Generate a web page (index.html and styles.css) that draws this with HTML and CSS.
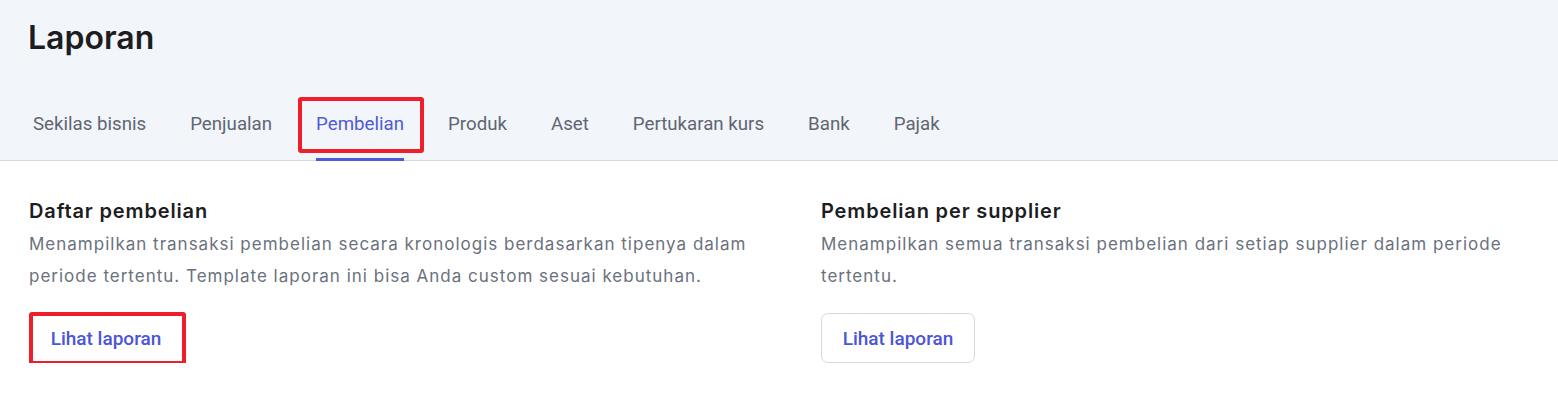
FILE: index.html
```html
<!DOCTYPE html>
<html lang="id">
<head>
<meta charset="utf-8">
<title>Laporan</title>
<link rel="stylesheet" href="styles.css">
</head>
<body>
<header class="page-header">
  <h1 class="title">Laporan</h1>
  <nav class="tabs">
    <a class="tab">Sekilas bisnis</a>
    <a class="tab">Penjualan</a>
    <a class="tab active">Pembelian<span class="mark"></span></a>
    <a class="tab">Produk</a>
    <a class="tab">Aset</a>
    <a class="tab">Pertukaran kurs</a>
    <a class="tab">Bank</a>
    <a class="tab">Pajak</a>
  </nav>
</header>
<main class="reports">
  <section class="report">
    <h2 class="report-title">Daftar pembelian</h2>
    <p class="report-desc">Menampilkan transaksi pembelian secara kronologis berdasarkan tipenya dalam periode tertentu. Template laporan ini bisa Anda custom sesuai kebutuhan.</p>
    <button class="btn marked">Lihat laporan</button>
  </section>
  <section class="report">
    <h2 class="report-title">Pembelian per supplier</h2>
    <p class="report-desc">Menampilkan semua transaksi pembelian dari setiap supplier dalam periode tertentu.</p>
    <button class="btn">Lihat laporan</button>
  </section>
</main>
</body>
</html>
```

FILE: styles.css
```css
* { box-sizing: border-box; }
html, body { margin: 0; padding: 0; background: #ffffff; }
body { font-family: Inter, "Noto Sans", sans-serif; }

.page-header {
  display: flex;
  flex-direction: column;
  background: #f2f5fa;
  border-bottom: 1px solid #d3d9e2;
  padding-left: 28px;
  height: 161px;
}
.title {
  margin: 0;
  padding-top: 18px;
  font-family: Inter, sans-serif;
  font-size: 32px;
  font-weight: 600;
  line-height: 40px;
  color: #1d1d1f;
}
.tabs {
  display: flex;
  gap: 44px;
  padding-left: 5px;
  margin-top: auto;
}
.tab {
  position: relative;
  font-family: Roboto, "Liberation Sans", sans-serif;
  font-size: 18.7px;
  line-height: 24px;
  padding-bottom: 24px;
  color: #5f6673;
  text-decoration: none;
}
.tab.active { color: #4f5ad6; }
.tab.active .mark {
  position: absolute;
  left: 0; right: 0;
  bottom: -1px;
  height: 3px;
  background: #4e5bd9;
}
.tab.active::after {
  content: "";
  position: absolute;
  left: -18px; right: -20px;
  top: -15px; bottom: 7px;
  border: 4px solid #ee1f2a;
  border-radius: 3px;
}

.reports {
  display: grid;
  grid-template-columns: 735px 735px;
  column-gap: 57px;
  padding: 37px 0 0 29px;
}
.report-title {
  margin: 0;
  font-family: Inter, sans-serif;
  font-size: 20px;
  font-weight: 600;
  line-height: 26px;
  letter-spacing: 0.85px;
  color: #1d1d1f;
}
.report-desc {
  margin: 4px 0 0;
  font-family: Inter, sans-serif;
  font-size: 17px;
  line-height: 32px;
  letter-spacing: 1px;
  color: #6a717d;
}
.btn {
  position: relative;
  display: block;
  margin-top: 21px;
  height: 50px;
  width: 154px;
  background: #ffffff;
  border: 1px solid #d3d8e1;
  border-radius: 7px;
  font-family: Roboto, "Liberation Sans", sans-serif;
  font-size: 19px;
  font-weight: 500;
  color: #4a55d8;
  padding: 0;
}
.btn.marked { border-color: transparent; }
.btn.marked::after {
  content: "";
  position: absolute;
  left: -1px; right: -4px;
  top: -2px; bottom: -3px;
  border: 4px solid #ee1f2a;
  border-radius: 3px;
}
```
